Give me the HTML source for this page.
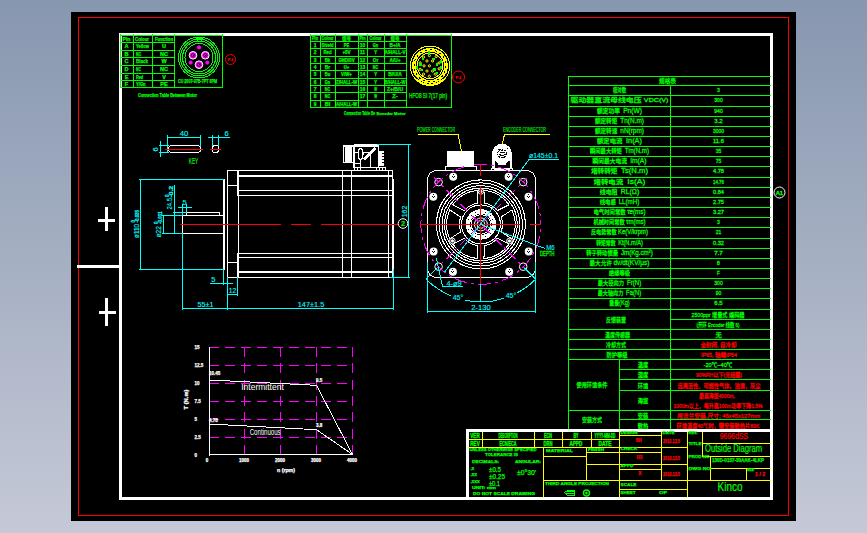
<!DOCTYPE html>
<html lang="zh"><head><meta charset="utf-8"><title>Outside Diagram</title>
<style>
html,body{margin:0;padding:0;width:867px;height:533px;overflow:hidden;background:#a6afc3}
svg{display:block;font-family:"Liberation Sans","Noto Sans CJK SC",sans-serif}
svg text{white-space:pre}
</style></head><body>
<svg width="867" height="533" viewBox="0 0 867 533" shape-rendering="crispEdges">
<defs><linearGradient id="bg" x1="0" y1="0" x2="0" y2="1"><stop offset="0" stop-color="#8797af"/><stop offset="1" stop-color="#c5c9d7"/></linearGradient></defs>
<rect x="0" y="0" width="867" height="533" fill="url(#bg)"/>
<rect x="71" y="12" width="725" height="509" fill="#000"/>
<rect x="78.5" y="17.5" width="710" height="498" fill="none" stroke="#ff0000" stroke-width="1"/>
<rect x="120.5" y="34.5" width="651" height="464" fill="none" stroke="#ffffff" stroke-width="3"/>
<rect x="77" y="265" width="43" height="3" fill="#ffffff"/>
<rect x="105" y="207" width="3" height="24" fill="#ffffff"/>
<rect x="98" y="219" width="17" height="3" fill="#ffffff"/>
<rect x="105" y="298" width="3" height="28" fill="#ffffff"/>
<rect x="99" y="311" width="17" height="3" fill="#ffffff"/>
<rect x="120" y="35" width="55" height="1" fill="#00ff00"/>
<rect x="120" y="42" width="55" height="1" fill="#00ff00"/>
<rect x="120" y="50" width="55" height="1" fill="#00ff00"/>
<rect x="120" y="57" width="55" height="1" fill="#00ff00"/>
<rect x="120" y="65" width="55" height="1" fill="#00ff00"/>
<rect x="120" y="73" width="55" height="1" fill="#00ff00"/>
<rect x="120" y="80" width="55" height="1" fill="#00ff00"/>
<rect x="120" y="87" width="55" height="1" fill="#00ff00"/>
<rect x="174" y="35" width="49" height="1" fill="#00ff00"/>
<rect x="174" y="87" width="49" height="1" fill="#00ff00"/>
<rect x="120" y="34" width="1" height="54" fill="#00ff00"/>
<rect x="133" y="34" width="1" height="54" fill="#00ff00"/>
<rect x="152" y="34" width="1" height="54" fill="#00ff00"/>
<rect x="174" y="34" width="1" height="54" fill="#00ff00"/>
<rect x="222" y="34" width="1" height="54" fill="#00ff00"/>
<text x="126.5" y="41.3" fill="#00ff00" stroke="#00ff00" stroke-width="0.25" font-size="5.5" text-anchor="middle" font-weight="bold" textLength="8" lengthAdjust="spacingAndGlyphs" >Pin</text>
<text x="135" y="41.3" fill="#00ff00" stroke="#00ff00" stroke-width="0.25" font-size="5.5" text-anchor="start" font-weight="bold" textLength="14" lengthAdjust="spacingAndGlyphs" >Colour</text>
<text x="155" y="41.3" fill="#00ff00" stroke="#00ff00" stroke-width="0.25" font-size="5.5" text-anchor="start" font-weight="bold" textLength="18" lengthAdjust="spacingAndGlyphs" >Function</text>
<text x="126.5" y="48.3" fill="#00ff00" stroke="#00ff00" stroke-width="0.25" font-size="5.5" text-anchor="middle" font-weight="bold" >A</text>
<text x="136" y="48.3" fill="#00ff00" stroke="#00ff00" stroke-width="0.25" font-size="5.5" text-anchor="start" font-weight="bold" textLength="13" lengthAdjust="spacingAndGlyphs" >Yellow</text>
<text x="164" y="48.3" fill="#00ff00" stroke="#00ff00" stroke-width="0.25" font-size="5.5" text-anchor="middle" font-weight="bold" >U</text>
<text x="126.5" y="56.3" fill="#00ff00" stroke="#00ff00" stroke-width="0.25" font-size="5.5" text-anchor="middle" font-weight="bold" >B</text>
<text x="136" y="56.3" fill="#00ff00" stroke="#00ff00" stroke-width="0.25" font-size="5.5" text-anchor="start" font-weight="bold" textLength="4.8" lengthAdjust="spacingAndGlyphs" >NC</text>
<text x="164" y="56.3" fill="#00ff00" stroke="#00ff00" stroke-width="0.25" font-size="5.5" text-anchor="middle" font-weight="bold" >NC</text>
<text x="126.5" y="63.3" fill="#00ff00" stroke="#00ff00" stroke-width="0.25" font-size="5.5" text-anchor="middle" font-weight="bold" >C</text>
<text x="136" y="63.3" fill="#00ff00" stroke="#00ff00" stroke-width="0.25" font-size="5.5" text-anchor="start" font-weight="bold" textLength="12.0" lengthAdjust="spacingAndGlyphs" >Black</text>
<text x="164" y="63.3" fill="#00ff00" stroke="#00ff00" stroke-width="0.25" font-size="5.5" text-anchor="middle" font-weight="bold" >W</text>
<text x="126.5" y="71.3" fill="#00ff00" stroke="#00ff00" stroke-width="0.25" font-size="5.5" text-anchor="middle" font-weight="bold" >D</text>
<text x="136" y="71.3" fill="#00ff00" stroke="#00ff00" stroke-width="0.25" font-size="5.5" text-anchor="start" font-weight="bold" textLength="4.8" lengthAdjust="spacingAndGlyphs" >NC</text>
<text x="164" y="71.3" fill="#00ff00" stroke="#00ff00" stroke-width="0.25" font-size="5.5" text-anchor="middle" font-weight="bold" >NC</text>
<text x="126.5" y="79.3" fill="#00ff00" stroke="#00ff00" stroke-width="0.25" font-size="5.5" text-anchor="middle" font-weight="bold" >E</text>
<text x="136" y="79.3" fill="#00ff00" stroke="#00ff00" stroke-width="0.25" font-size="5.5" text-anchor="start" font-weight="bold" textLength="7.199999999999999" lengthAdjust="spacingAndGlyphs" >Red</text>
<text x="164" y="79.3" fill="#00ff00" stroke="#00ff00" stroke-width="0.25" font-size="5.5" text-anchor="middle" font-weight="bold" >V</text>
<text x="126.5" y="86.3" fill="#00ff00" stroke="#00ff00" stroke-width="0.25" font-size="5.5" text-anchor="middle" font-weight="bold" >F</text>
<text x="136" y="86.3" fill="#00ff00" stroke="#00ff00" stroke-width="0.25" font-size="5.5" text-anchor="start" font-weight="bold" textLength="9.6" lengthAdjust="spacingAndGlyphs" >Y/Gn</text>
<text x="164" y="86.3" fill="#00ff00" stroke="#00ff00" stroke-width="0.25" font-size="5.5" text-anchor="middle" font-weight="bold" >PE</text>
<circle cx="199" cy="57.5" r="20.5" stroke="#00ff00" stroke-width="1" fill="none" />
<circle cx="199" cy="57.5" r="18.5" stroke="#00ff00" stroke-width="1" fill="none" />
<circle cx="199" cy="57.5" r="16.5" stroke="#00ff00" stroke-width="1" fill="none" />
<circle cx="199" cy="57.5" r="14" stroke="#00ff00" stroke-width="1" fill="none" />
<circle cx="193" cy="55.3" r="3.8" stroke="#ffffff" stroke-width="1" fill="#ff00ff"  shape-rendering="geometricPrecision"/>
<circle cx="193" cy="55.3" r="1.7" stroke="#000" stroke-width="0.8" fill="none"  shape-rendering="geometricPrecision"/>
<rect x="192.5" y="54.8" width="1" height="1" fill="#000"/>
<circle cx="205.3" cy="55.3" r="3.8" stroke="#ffffff" stroke-width="1" fill="#ff00ff"  shape-rendering="geometricPrecision"/>
<circle cx="205.3" cy="55.3" r="1.7" stroke="#000" stroke-width="0.8" fill="none"  shape-rendering="geometricPrecision"/>
<rect x="204.8" y="54.8" width="1" height="1" fill="#000"/>
<circle cx="199" cy="64.7" r="3.8" stroke="#ffffff" stroke-width="1" fill="#ff00ff"  shape-rendering="geometricPrecision"/>
<circle cx="199" cy="64.7" r="1.7" stroke="#000" stroke-width="0.8" fill="none"  shape-rendering="geometricPrecision"/>
<rect x="198.5" y="64.2" width="1" height="1" fill="#000"/>
<circle cx="199" cy="47.4" r="1.6" stroke="#ff00ff" stroke-width="1" fill="#ff00ff"  shape-rendering="geometricPrecision"/>
<circle cx="190.7" cy="62.6" r="1.6" stroke="#ff00ff" stroke-width="1" fill="#ff00ff"  shape-rendering="geometricPrecision"/>
<circle cx="207.4" cy="62.6" r="1.6" stroke="#ff00ff" stroke-width="1" fill="#ff00ff"  shape-rendering="geometricPrecision"/>
<rect x="196" y="38" width="7" height="1" fill="#00ff00"/>
<rect x="197" y="38" width="1" height="3" fill="#00ff00"/>
<rect x="201" y="38" width="1" height="3" fill="#00ff00"/>
<text x="197.5" y="83" fill="#00ff00" stroke="#00ff00" stroke-width="0.25" font-size="5" text-anchor="middle" font-weight="bold" textLength="39" lengthAdjust="spacingAndGlyphs" >CU 2007-07B-7PT 8PM</text>
<text x="167.5" y="97" fill="#00ff00" stroke="#00ff00" stroke-width="0.25" font-size="5" text-anchor="middle" font-weight="bold" textLength="59" lengthAdjust="spacingAndGlyphs" >Connection Table Between Motor</text>
<circle cx="230.5" cy="59.5" r="5" stroke="#ff0000" stroke-width="1" fill="none"  shape-rendering="geometricPrecision"/>
<text x="230.5" y="61" fill="#ff0000" stroke="#ff0000" stroke-width="0.25" font-size="3.5" text-anchor="middle" font-weight="normal" >P-1</text>
<rect x="310" y="35" width="97" height="1" fill="#00ff00"/>
<rect x="310" y="41" width="97" height="1" fill="#00ff00"/>
<rect x="310" y="48" width="97" height="1" fill="#00ff00"/>
<rect x="310" y="56" width="97" height="1" fill="#00ff00"/>
<rect x="310" y="63" width="97" height="1" fill="#00ff00"/>
<rect x="310" y="70" width="97" height="1" fill="#00ff00"/>
<rect x="310" y="78" width="97" height="1" fill="#00ff00"/>
<rect x="310" y="85" width="97" height="1" fill="#00ff00"/>
<rect x="310" y="92" width="97" height="1" fill="#00ff00"/>
<rect x="310" y="100" width="97" height="1" fill="#00ff00"/>
<rect x="310" y="107" width="97" height="1" fill="#00ff00"/>
<rect x="406" y="35" width="46" height="1" fill="#00ff00"/>
<rect x="406" y="107" width="46" height="1" fill="#00ff00"/>
<rect x="310" y="34" width="1" height="74" fill="#00ff00"/>
<rect x="320" y="34" width="1" height="74" fill="#00ff00"/>
<rect x="335" y="34" width="1" height="74" fill="#00ff00"/>
<rect x="358" y="34" width="1" height="74" fill="#00ff00"/>
<rect x="367" y="34" width="1" height="74" fill="#00ff00"/>
<rect x="384" y="34" width="1" height="74" fill="#00ff00"/>
<rect x="406" y="34" width="1" height="74" fill="#00ff00"/>
<rect x="451" y="34" width="1" height="74" fill="#00ff00"/>
<text x="315" y="40.2" fill="#00ff00" stroke="#00ff00" stroke-width="0.25" font-size="5" text-anchor="middle" font-weight="bold" textLength="6" lengthAdjust="spacingAndGlyphs" >Pin</text>
<text x="327.5" y="40.2" fill="#00ff00" stroke="#00ff00" stroke-width="0.25" font-size="5" text-anchor="middle" font-weight="bold" textLength="12" lengthAdjust="spacingAndGlyphs" >Colour</text>
<text x="346.5" y="40.2" fill="#00ff00" stroke="#00ff00" stroke-width="0.25" font-size="5" text-anchor="middle" font-weight="bold" textLength="9" lengthAdjust="spacingAndGlyphs" >信号</text>
<text x="362.5" y="40.2" fill="#00ff00" stroke="#00ff00" stroke-width="0.25" font-size="5" text-anchor="middle" font-weight="bold" textLength="6" lengthAdjust="spacingAndGlyphs" >Pin</text>
<text x="375.5" y="40.2" fill="#00ff00" stroke="#00ff00" stroke-width="0.25" font-size="5" text-anchor="middle" font-weight="bold" textLength="12" lengthAdjust="spacingAndGlyphs" >Colour</text>
<text x="395" y="40.2" fill="#00ff00" stroke="#00ff00" stroke-width="0.25" font-size="5" text-anchor="middle" font-weight="bold" textLength="9" lengthAdjust="spacingAndGlyphs" >信号</text>
<text x="315" y="47" fill="#00ff00" stroke="#00ff00" stroke-width="0.25" font-size="5" text-anchor="middle" font-weight="bold" textLength="2.7" lengthAdjust="spacingAndGlyphs" >1</text>
<text x="327.5" y="47" fill="#00ff00" stroke="#00ff00" stroke-width="0.25" font-size="5" text-anchor="middle" font-weight="bold" textLength="12" lengthAdjust="spacingAndGlyphs" >Shield</text>
<text x="346.5" y="47" fill="#00ff00" stroke="#00ff00" stroke-width="0.25" font-size="5" text-anchor="middle" font-weight="bold" textLength="5.4" lengthAdjust="spacingAndGlyphs" >PE</text>
<text x="362.5" y="47" fill="#00ff00" stroke="#00ff00" stroke-width="0.25" font-size="5" text-anchor="middle" font-weight="bold" textLength="5.4" lengthAdjust="spacingAndGlyphs" >10</text>
<text x="375.5" y="47" fill="#00ff00" stroke="#00ff00" stroke-width="0.25" font-size="5" text-anchor="middle" font-weight="bold" textLength="5.4" lengthAdjust="spacingAndGlyphs" >Gn</text>
<text x="395" y="47" fill="#00ff00" stroke="#00ff00" stroke-width="0.25" font-size="5" text-anchor="middle" font-weight="bold" textLength="10.8" lengthAdjust="spacingAndGlyphs" >B+/A</text>
<text x="315" y="54" fill="#00ff00" stroke="#00ff00" stroke-width="0.25" font-size="5" text-anchor="middle" font-weight="bold" textLength="2.7" lengthAdjust="spacingAndGlyphs" >2</text>
<text x="327.5" y="54" fill="#00ff00" stroke="#00ff00" stroke-width="0.25" font-size="5" text-anchor="middle" font-weight="bold" textLength="8.100000000000001" lengthAdjust="spacingAndGlyphs" >Red</text>
<text x="346.5" y="54" fill="#00ff00" stroke="#00ff00" stroke-width="0.25" font-size="5" text-anchor="middle" font-weight="bold" textLength="8.100000000000001" lengthAdjust="spacingAndGlyphs" >+5V</text>
<text x="362.5" y="54" fill="#00ff00" stroke="#00ff00" stroke-width="0.25" font-size="5" text-anchor="middle" font-weight="bold" textLength="5.4" lengthAdjust="spacingAndGlyphs" >11</text>
<text x="375.5" y="54" fill="#00ff00" stroke="#00ff00" stroke-width="0.25" font-size="5" text-anchor="middle" font-weight="bold" textLength="2.7" lengthAdjust="spacingAndGlyphs" >Y</text>
<text x="395" y="54" fill="#00ff00" stroke="#00ff00" stroke-width="0.25" font-size="5" text-anchor="middle" font-weight="bold" textLength="21" lengthAdjust="spacingAndGlyphs" >A/HALL-V</text>
<text x="315" y="62" fill="#00ff00" stroke="#00ff00" stroke-width="0.25" font-size="5" text-anchor="middle" font-weight="bold" textLength="2.7" lengthAdjust="spacingAndGlyphs" >3</text>
<text x="327.5" y="62" fill="#00ff00" stroke="#00ff00" stroke-width="0.25" font-size="5" text-anchor="middle" font-weight="bold" textLength="5.4" lengthAdjust="spacingAndGlyphs" >Bk</text>
<text x="346.5" y="62" fill="#00ff00" stroke="#00ff00" stroke-width="0.25" font-size="5" text-anchor="middle" font-weight="bold" textLength="16.200000000000003" lengthAdjust="spacingAndGlyphs" >GND/0V</text>
<text x="362.5" y="62" fill="#00ff00" stroke="#00ff00" stroke-width="0.25" font-size="5" text-anchor="middle" font-weight="bold" textLength="5.4" lengthAdjust="spacingAndGlyphs" >12</text>
<text x="375.5" y="62" fill="#00ff00" stroke="#00ff00" stroke-width="0.25" font-size="5" text-anchor="middle" font-weight="bold" textLength="5.4" lengthAdjust="spacingAndGlyphs" >Or</text>
<text x="395" y="62" fill="#00ff00" stroke="#00ff00" stroke-width="0.25" font-size="5" text-anchor="middle" font-weight="bold" textLength="10.8" lengthAdjust="spacingAndGlyphs" >A/U+</text>
<text x="315" y="69" fill="#00ff00" stroke="#00ff00" stroke-width="0.25" font-size="5" text-anchor="middle" font-weight="bold" textLength="2.7" lengthAdjust="spacingAndGlyphs" >4</text>
<text x="327.5" y="69" fill="#00ff00" stroke="#00ff00" stroke-width="0.25" font-size="5" text-anchor="middle" font-weight="bold" textLength="5.4" lengthAdjust="spacingAndGlyphs" >Br</text>
<text x="346.5" y="69" fill="#00ff00" stroke="#00ff00" stroke-width="0.25" font-size="5" text-anchor="middle" font-weight="bold" textLength="5.4" lengthAdjust="spacingAndGlyphs" >U+</text>
<text x="362.5" y="69" fill="#00ff00" stroke="#00ff00" stroke-width="0.25" font-size="5" text-anchor="middle" font-weight="bold" textLength="5.4" lengthAdjust="spacingAndGlyphs" >13</text>
<text x="375.5" y="69" fill="#00ff00" stroke="#00ff00" stroke-width="0.25" font-size="5" text-anchor="middle" font-weight="bold" textLength="5.4" lengthAdjust="spacingAndGlyphs" >NC</text>
<text x="315" y="76" fill="#00ff00" stroke="#00ff00" stroke-width="0.25" font-size="5" text-anchor="middle" font-weight="bold" textLength="2.7" lengthAdjust="spacingAndGlyphs" >5</text>
<text x="327.5" y="76" fill="#00ff00" stroke="#00ff00" stroke-width="0.25" font-size="5" text-anchor="middle" font-weight="bold" textLength="5.4" lengthAdjust="spacingAndGlyphs" >Bu</text>
<text x="346.5" y="76" fill="#00ff00" stroke="#00ff00" stroke-width="0.25" font-size="5" text-anchor="middle" font-weight="bold" textLength="10.8" lengthAdjust="spacingAndGlyphs" >V/W+</text>
<text x="362.5" y="76" fill="#00ff00" stroke="#00ff00" stroke-width="0.25" font-size="5" text-anchor="middle" font-weight="bold" textLength="5.4" lengthAdjust="spacingAndGlyphs" >14</text>
<text x="375.5" y="76" fill="#00ff00" stroke="#00ff00" stroke-width="0.25" font-size="5" text-anchor="middle" font-weight="bold" textLength="2.7" lengthAdjust="spacingAndGlyphs" >Y</text>
<text x="395" y="76" fill="#00ff00" stroke="#00ff00" stroke-width="0.25" font-size="5" text-anchor="middle" font-weight="bold" textLength="13.5" lengthAdjust="spacingAndGlyphs" >B/U/A</text>
<text x="315" y="84" fill="#00ff00" stroke="#00ff00" stroke-width="0.25" font-size="5" text-anchor="middle" font-weight="bold" textLength="2.7" lengthAdjust="spacingAndGlyphs" >6</text>
<text x="327.5" y="84" fill="#00ff00" stroke="#00ff00" stroke-width="0.25" font-size="5" text-anchor="middle" font-weight="bold" textLength="5.4" lengthAdjust="spacingAndGlyphs" >Gn</text>
<text x="346.5" y="84" fill="#00ff00" stroke="#00ff00" stroke-width="0.25" font-size="5" text-anchor="middle" font-weight="bold" textLength="21" lengthAdjust="spacingAndGlyphs" >Z/HALL-W</text>
<text x="362.5" y="84" fill="#00ff00" stroke="#00ff00" stroke-width="0.25" font-size="5" text-anchor="middle" font-weight="bold" textLength="5.4" lengthAdjust="spacingAndGlyphs" >15</text>
<text x="375.5" y="84" fill="#00ff00" stroke="#00ff00" stroke-width="0.25" font-size="5" text-anchor="middle" font-weight="bold" textLength="2.7" lengthAdjust="spacingAndGlyphs" >Y</text>
<text x="395" y="84" fill="#00ff00" stroke="#00ff00" stroke-width="0.25" font-size="5" text-anchor="middle" font-weight="bold" textLength="21" lengthAdjust="spacingAndGlyphs" >B/HALL-W</text>
<text x="315" y="91" fill="#00ff00" stroke="#00ff00" stroke-width="0.25" font-size="5" text-anchor="middle" font-weight="bold" textLength="2.7" lengthAdjust="spacingAndGlyphs" >7</text>
<text x="327.5" y="91" fill="#00ff00" stroke="#00ff00" stroke-width="0.25" font-size="5" text-anchor="middle" font-weight="bold" textLength="5.4" lengthAdjust="spacingAndGlyphs" >NC</text>
<text x="362.5" y="91" fill="#00ff00" stroke="#00ff00" stroke-width="0.25" font-size="5" text-anchor="middle" font-weight="bold" textLength="5.4" lengthAdjust="spacingAndGlyphs" >16</text>
<text x="375.5" y="91" fill="#00ff00" stroke="#00ff00" stroke-width="0.25" font-size="5" text-anchor="middle" font-weight="bold" textLength="2.7" lengthAdjust="spacingAndGlyphs" >W</text>
<text x="395" y="91" fill="#00ff00" stroke="#00ff00" stroke-width="0.25" font-size="5" text-anchor="middle" font-weight="bold" textLength="16.200000000000003" lengthAdjust="spacingAndGlyphs" >Z+/B/U</text>
<text x="315" y="98" fill="#00ff00" stroke="#00ff00" stroke-width="0.25" font-size="5" text-anchor="middle" font-weight="bold" textLength="2.7" lengthAdjust="spacingAndGlyphs" >8</text>
<text x="327.5" y="98" fill="#00ff00" stroke="#00ff00" stroke-width="0.25" font-size="5" text-anchor="middle" font-weight="bold" textLength="5.4" lengthAdjust="spacingAndGlyphs" >NC</text>
<text x="362.5" y="98" fill="#00ff00" stroke="#00ff00" stroke-width="0.25" font-size="5" text-anchor="middle" font-weight="bold" textLength="5.4" lengthAdjust="spacingAndGlyphs" >17</text>
<text x="375.5" y="98" fill="#00ff00" stroke="#00ff00" stroke-width="0.25" font-size="5" text-anchor="middle" font-weight="bold" textLength="2.7" lengthAdjust="spacingAndGlyphs" >W</text>
<text x="395" y="98" fill="#00ff00" stroke="#00ff00" stroke-width="0.25" font-size="5" text-anchor="middle" font-weight="bold" textLength="5.4" lengthAdjust="spacingAndGlyphs" >Z-</text>
<text x="315" y="106" fill="#00ff00" stroke="#00ff00" stroke-width="0.25" font-size="5" text-anchor="middle" font-weight="bold" textLength="2.7" lengthAdjust="spacingAndGlyphs" >9</text>
<text x="327.5" y="106" fill="#00ff00" stroke="#00ff00" stroke-width="0.25" font-size="5" text-anchor="middle" font-weight="bold" textLength="5.4" lengthAdjust="spacingAndGlyphs" >Bl</text>
<text x="346.5" y="106" fill="#00ff00" stroke="#00ff00" stroke-width="0.25" font-size="5" text-anchor="middle" font-weight="bold" textLength="21" lengthAdjust="spacingAndGlyphs" >A/HALL-W</text>
<circle cx="430" cy="65.8" r="19.7" stroke="#ffff00" stroke-width="1" fill="none" />
<circle cx="430" cy="65.8" r="16" stroke="#ffff00" stroke-width="3.6" fill="none" />
<circle cx="430" cy="65.8" r="12.8" stroke="#ffff00" stroke-width="1" fill="none" />
<path d="M416.7 79.1 A18.8 18.8 0 0 0 443.3 79.1" fill="none" stroke="#ffff00" stroke-width="1.6"/>
<circle cx="430" cy="65.8" r="16" stroke="#000" stroke-width="1" fill="none" stroke-dasharray="2 3"/>
<circle cx="429.390243902439" cy="55.609756097560975" r="1.1" stroke="#ffff00" stroke-width="1" fill="none"  shape-rendering="geometricPrecision"/>
<circle cx="426.9512195121951" cy="60.97560975609756" r="1.1" stroke="#ffff00" stroke-width="1" fill="none"  shape-rendering="geometricPrecision"/>
<circle cx="432.609756097561" cy="60.97560975609756" r="1.1" stroke="#ffff00" stroke-width="1" fill="none"  shape-rendering="geometricPrecision"/>
<circle cx="420.1219512195122" cy="62.92682926829268" r="1.1" stroke="#ffff00" stroke-width="1" fill="none"  shape-rendering="geometricPrecision"/>
<circle cx="424.0243902439024" cy="65.85365853658537" r="1.1" stroke="#ffff00" stroke-width="1" fill="none"  shape-rendering="geometricPrecision"/>
<circle cx="429.390243902439" cy="65.85365853658537" r="1.1" stroke="#ffff00" stroke-width="1" fill="none"  shape-rendering="geometricPrecision"/>
<circle cx="439.1463414634146" cy="62.92682926829268" r="1.1" stroke="#ffff00" stroke-width="1" fill="none"  shape-rendering="geometricPrecision"/>
<circle cx="420.1219512195122" cy="69.26829268292683" r="1.1" stroke="#ffff00" stroke-width="1" fill="none"  shape-rendering="geometricPrecision"/>
<circle cx="426.9512195121951" cy="71.02439024390245" r="1.1" stroke="#ffff00" stroke-width="1" fill="none"  shape-rendering="geometricPrecision"/>
<circle cx="432.609756097561" cy="71.02439024390245" r="1.1" stroke="#ffff00" stroke-width="1" fill="none"  shape-rendering="geometricPrecision"/>
<circle cx="439.1463414634146" cy="68.78048780487805" r="1.1" stroke="#ffff00" stroke-width="1" fill="none"  shape-rendering="geometricPrecision"/>
<circle cx="423.5365853658537" cy="74.14634146341464" r="1.1" stroke="#ffff00" stroke-width="1" fill="none"  shape-rendering="geometricPrecision"/>
<circle cx="429.390243902439" cy="76.29268292682926" r="1.1" stroke="#ffff00" stroke-width="1" fill="none"  shape-rendering="geometricPrecision"/>
<circle cx="435.2439024390244" cy="74.14634146341464" r="1.1" stroke="#ffff00" stroke-width="1" fill="none"  shape-rendering="geometricPrecision"/>
<circle cx="436.219512195122" cy="56.58536585365854" r="1.1" stroke="#ffff00" stroke-width="1" fill="none"  shape-rendering="geometricPrecision"/>
<circle cx="423.5365853658537" cy="57.07317073170732" r="1.1" stroke="#ffff00" stroke-width="1" fill="none"  shape-rendering="geometricPrecision"/>
<rect x="421.8" y="57.8" width="2.4" height="2.4" fill="#00ff00"/>
<rect x="432.1" y="57.8" width="2.4" height="2.4" fill="#00ff00"/>
<rect x="419.4" y="63.2" width="2.4" height="2.4" fill="#00ff00"/>
<rect x="435.5" y="63.2" width="2.4" height="2.4" fill="#00ff00"/>
<rect x="439.9" y="60.3" width="2.4" height="2.4" fill="#00ff00"/>
<rect x="433.1" y="68.1" width="2.4" height="2.4" fill="#00ff00"/>
<rect x="439.9" y="66.1" width="2.4" height="2.4" fill="#00ff00"/>
<rect x="436.0" y="71.5" width="2.4" height="2.4" fill="#00ff00"/>
<rect x="420.9" y="68.6" width="2.4" height="2.4" fill="#00ff00"/>
<rect x="415.5" y="66.1" width="2.4" height="2.4" fill="#00ff00"/>
<rect x="428" y="51" width="2" height="4" fill="#00ff00"/>
<text x="428" y="98" fill="#00ff00" stroke="#00ff00" stroke-width="0.25" font-size="6.5" text-anchor="middle" font-weight="normal" textLength="38" lengthAdjust="spacingAndGlyphs" >HFO8 SI 7(17 pin)</text>
<text x="375" y="114.5" fill="#00ff00" stroke="#00ff00" stroke-width="0.25" font-size="5" text-anchor="end" font-weight="bold" textLength="31" lengthAdjust="spacingAndGlyphs" >Connection Table Be</text>
<text x="376.5" y="114.5" fill="#00ff00" stroke="#00ff00" stroke-width="0.25" font-size="4.2" text-anchor="start" font-weight="bold" textLength="29" lengthAdjust="spacingAndGlyphs" >Encoder Motor</text>
<circle cx="458.5" cy="77" r="6" stroke="#ff0000" stroke-width="1" fill="none"  shape-rendering="geometricPrecision"/>
<text x="458.5" y="78.5" fill="#ff0000" stroke="#ff0000" stroke-width="0.25" font-size="3.5" text-anchor="middle" font-weight="normal" >P-1</text>
<rect x="167" y="137" width="34" height="1" fill="#00ffff"/>
<rect x="167" y="135" width="1" height="17" fill="#00ffff"/>
<rect x="200" y="135" width="1" height="17" fill="#00ffff"/>
<text x="184" y="135.6" fill="#00ffff" stroke="#00ffff" stroke-width="0.12" font-size="7.5" text-anchor="middle" font-weight="normal" textLength="8.5" lengthAdjust="spacingAndGlyphs" >40</text>
<rect x="168.5" y="145.5" width="32" height="7" rx="3.5" fill="none" stroke="#ffffff"/>
<rect x="165" y="149" width="38" height="1" fill="#ff0000"/>
<rect x="160" y="141" width="1" height="16" fill="#00ffff"/>
<rect x="159" y="145" width="10" height="1" fill="#00ffff"/>
<rect x="159" y="152" width="10" height="1" fill="#00ffff"/>
<text transform="translate(158,149.5) rotate(-90)" fill="#00ffff" stroke="#00ffff" stroke-width="0.12" font-size="7.5" text-anchor="middle" font-weight="normal">6</text>
<rect x="208" y="137" width="22" height="1" fill="#00ffff"/>
<rect x="212" y="135" width="1" height="11" fill="#00ffff"/>
<rect x="218" y="135" width="1" height="11" fill="#00ffff"/>
<rect x="212.5" y="145.5" width="6" height="7" rx="2.5" fill="none" stroke="#ffffff"/>
<rect x="210" y="149" width="11" height="1" fill="#ff0000"/>
<text x="226.5" y="135.6" fill="#00ffff" stroke="#00ffff" stroke-width="0.12" font-size="7.5" text-anchor="middle" font-weight="normal" >6</text>
<text x="193.5" y="163.8" fill="#00ff00" stroke="#00ff00" stroke-width="0.12" font-size="9" text-anchor="middle" font-weight="normal" textLength="9.5" lengthAdjust="spacingAndGlyphs" >KEY</text>
<rect x="223" y="179" width="2" height="91" fill="#ffffff"/>
<rect x="227" y="170" width="1" height="108" fill="#ffffff"/>
<rect x="227" y="170" width="166" height="1" fill="#ffffff"/>
<rect x="227" y="277" width="166" height="1" fill="#ffffff"/>
<rect x="227" y="185" width="11" height="1" fill="#ffffff"/>
<rect x="227" y="262" width="11" height="1" fill="#ffffff"/>
<rect x="237" y="170" width="1" height="26" fill="#ffffff"/>
<rect x="237" y="253" width="1" height="25" fill="#ffffff"/>
<rect x="238" y="170" width="1" height="108" fill="#ffffff"/>
<rect x="238" y="175" width="155" height="2" fill="#ffffff"/>
<rect x="238" y="190" width="155" height="1" fill="#ffffff"/>
<rect x="238" y="195" width="155" height="1" fill="#ffffff"/>
<rect x="238" y="253" width="155" height="1" fill="#ffffff"/>
<rect x="238" y="257" width="155" height="1" fill="#ffffff"/>
<rect x="238" y="271" width="155" height="2" fill="#ffffff"/>
<rect x="342" y="170" width="1" height="108" fill="#ffffff"/>
<rect x="351" y="170" width="1" height="108" fill="#ffffff"/>
<rect x="388" y="170" width="1" height="108" fill="#ffffff"/>
<rect x="392" y="170" width="1" height="108" fill="#ffffff"/>
<rect x="393" y="179" width="1" height="91" fill="#ffffff"/>
<rect x="183" y="215" width="42" height="1" fill="#ffffff"/>
<rect x="183" y="233" width="42" height="1" fill="#ffffff"/>
<rect x="182" y="216" width="1" height="17" fill="#ffffff"/>
<rect x="187" y="212" width="33" height="1" fill="#ffffff"/>
<rect x="186" y="213" width="1" height="2" fill="#ffffff"/>
<rect x="219" y="213" width="1" height="2" fill="#ffffff"/>
<rect x="180" y="224" width="101" height="1" fill="#ff0000"/>
<rect x="291" y="224" width="20" height="1" fill="#ff0000"/>
<rect x="321" y="224" width="77" height="1" fill="#ff0000"/>
<circle cx="403" cy="223.5" r="4.8" stroke="#ffffff" stroke-width="1" fill="none"  shape-rendering="geometricPrecision"/>
<text x="403" y="226.3" fill="#00ff00" stroke="#00ff00" stroke-width="0.12" font-size="7.5" text-anchor="middle" font-weight="bold" >2</text>
<rect x="343" y="145" width="10" height="18" rx="1.5" fill="#ffffff"/>
<rect x="344" y="147" width="1" height="15" fill="#000"/>
<rect x="352" y="147" width="1" height="15" fill="#000"/>
<path d="M353.5 167.5 V146.5 Q353.5 144.5 355.5 144.5 H376.5 Q378.5 144.5 378.5 146.5 V167.5" fill="none" stroke="#ffffff"/>
<rect x="354" y="145" width="25" height="2" fill="#ffffff"/>
<rect x="354" y="146" width="1" height="22" fill="#ffffff"/>
<ellipse cx="360.6" cy="154" rx="2.3" ry="5.8" fill="none" stroke="#ffffff" stroke-width="1.3"/>
<line x1="375" y1="147.4" x2="363.2" y2="159.2" stroke="#ffffff" stroke-width="1" />
<line x1="376" y1="148.4" x2="364.2" y2="160.2" stroke="#ffffff" stroke-width="1" />
<rect x="355" y="152" width="3" height="1" fill="#ffffff"/>
<rect x="363" y="152" width="8" height="1" fill="#ffffff"/>
<rect x="370" y="152" width="1" height="15" fill="#ffffff"/>
<rect x="379" y="151" width="5" height="15" fill="#ffffff"/>
<rect x="382" y="153" width="2" height="1" fill="#000"/>
<rect x="382" y="156" width="2" height="1" fill="#000"/>
<rect x="382" y="159" width="2" height="1" fill="#000"/>
<rect x="382" y="162" width="2" height="1" fill="#000"/>
<rect x="355" y="163" width="6" height="1" fill="#ffffff"/>
<rect x="360" y="160" width="1" height="7" fill="#ffffff"/>
<rect x="354" y="167" width="32" height="1" fill="#ffffff"/>
<rect x="354" y="167" width="1" height="3" fill="#ffffff"/>
<rect x="357" y="167" width="1" height="3" fill="#ffffff"/>
<rect x="360" y="167" width="1" height="3" fill="#ffffff"/>
<rect x="376" y="167" width="1" height="3" fill="#ffffff"/>
<rect x="379" y="167" width="1" height="3" fill="#ffffff"/>
<rect x="382" y="167" width="1" height="3" fill="#ffffff"/>
<rect x="385" y="167" width="1" height="3" fill="#ffffff"/>
<rect x="139" y="179" width="85" height="1" fill="#00ffff"/>
<rect x="139" y="269" width="85" height="1" fill="#00ffff"/>
<rect x="140" y="179" width="1" height="91" fill="#00ffff"/>
<text transform="translate(139,238) rotate(-90)" fill="#00ffff" stroke="#00ffff" stroke-width="0.12" font-size="7.5" text-anchor="start" font-weight="normal" textLength="14" lengthAdjust="spacingAndGlyphs">ø110</text>
<text transform="translate(135.2,222.5) rotate(-90)" fill="#00ffff" stroke="#00ffff" stroke-width="0.25" font-size="4.5" text-anchor="start" font-weight="bold">0</text>
<text transform="translate(139.3,222.5) rotate(-90)" fill="#00ffff" stroke="#00ffff" stroke-width="0.25" font-size="4.5" text-anchor="start" font-weight="bold" textLength="12.5" lengthAdjust="spacingAndGlyphs">-0.035</text>
<rect x="174" y="185" width="1" height="49" fill="#00ffff"/>
<rect x="173" y="212" width="14" height="1" fill="#00ffff"/>
<text transform="translate(172.3,209.5) rotate(-90)" fill="#00ffff" stroke="#00ffff" stroke-width="0.12" font-size="7.5" text-anchor="start" font-weight="normal" textLength="11.5" lengthAdjust="spacingAndGlyphs">24.5</text>
<text transform="translate(168.5,197) rotate(-90)" fill="#00ffff" stroke="#00ffff" stroke-width="0.25" font-size="4.5" text-anchor="start" font-weight="bold">0</text>
<text transform="translate(172.6,197.5) rotate(-90)" fill="#00ffff" stroke="#00ffff" stroke-width="0.25" font-size="4.5" text-anchor="start" font-weight="bold" textLength="11.5" lengthAdjust="spacingAndGlyphs">-0.2</text>
<rect x="178" y="207" width="14" height="1" fill="#00ffff"/>
<rect x="182" y="204" width="1" height="12" fill="#00ffff"/>
<rect x="186" y="204" width="1" height="9" fill="#00ffff"/>
<text x="184.7" y="205.4" fill="#00ffff" stroke="#00ffff" stroke-width="0.12" font-size="7.5" text-anchor="middle" font-weight="normal" >5</text>
<rect x="163" y="215" width="1" height="19" fill="#00ffff"/>
<rect x="162" y="215" width="21" height="1" fill="#00ffff"/>
<rect x="162" y="233" width="21" height="1" fill="#00ffff"/>
<text transform="translate(161.3,237.5) rotate(-90)" fill="#00ffff" stroke="#00ffff" stroke-width="0.12" font-size="7.5" text-anchor="start" font-weight="normal" textLength="11.5" lengthAdjust="spacingAndGlyphs">ø22</text>
<text transform="translate(157.5,224) rotate(-90)" fill="#00ffff" stroke="#00ffff" stroke-width="0.25" font-size="4.5" text-anchor="start" font-weight="bold">0</text>
<text transform="translate(161.6,224) rotate(-90)" fill="#00ffff" stroke="#00ffff" stroke-width="0.25" font-size="4.5" text-anchor="start" font-weight="bold" textLength="12.5" lengthAdjust="spacingAndGlyphs">-0.011</text>
<rect x="182" y="233" width="1" height="77" fill="#00ffff"/>
<rect x="182" y="308" width="212" height="1" fill="#00ffff"/>
<rect x="227" y="277" width="1" height="33" fill="#00ffff"/>
<rect x="393" y="269" width="1" height="41" fill="#00ffff"/>
<text x="205.5" y="307.2" fill="#00ffff" stroke="#00ffff" stroke-width="0.12" font-size="7.5" text-anchor="middle" font-weight="normal" textLength="16" lengthAdjust="spacingAndGlyphs" >55±1</text>
<text x="311" y="307.2" fill="#00ffff" stroke="#00ffff" stroke-width="0.12" font-size="7.5" text-anchor="middle" font-weight="normal" textLength="26.5" lengthAdjust="spacingAndGlyphs" >147±1.5</text>
<rect x="210" y="283" width="23" height="1" fill="#00ffff"/>
<rect x="223" y="269" width="1" height="16" fill="#00ffff"/>
<text x="213.3" y="282" fill="#00ffff" stroke="#00ffff" stroke-width="0.12" font-size="7.5" text-anchor="middle" font-weight="normal" >5</text>
<rect x="237" y="277" width="1" height="19" fill="#00ffff"/>
<rect x="227" y="294" width="11" height="1" fill="#00ffff"/>
<text x="232.5" y="293.3" fill="#00ffff" stroke="#00ffff" stroke-width="0.12" font-size="7.5" text-anchor="middle" font-weight="normal" textLength="7.5" lengthAdjust="spacingAndGlyphs" >12</text>
<rect x="377" y="144" width="34" height="1" fill="#00ffff"/>
<rect x="408" y="144" width="1" height="134" fill="#00ffff"/>
<rect x="390" y="277" width="20" height="1" fill="#00ffff"/>
<text transform="translate(406.5,211.5) rotate(-90)" fill="#00ffff" stroke="#00ffff" stroke-width="0.12" font-size="7.5" text-anchor="middle" font-weight="normal" textLength="11.5" lengthAdjust="spacingAndGlyphs">162</text>
<text x="417" y="132.2" fill="#00ff00" stroke="#00ff00" stroke-width="0.12" font-size="7" text-anchor="start" font-weight="normal" textLength="38" lengthAdjust="spacingAndGlyphs" >POWER CONNECTOR</text>
<rect x="418" y="134" width="40" height="1" fill="#ffff00"/>
<line x1="458" y1="134.5" x2="461.5" y2="151" stroke="#ffff00" stroke-width="1" />
<text x="503" y="132.2" fill="#00ff00" stroke="#00ff00" stroke-width="0.12" font-size="7" text-anchor="start" font-weight="normal" textLength="43" lengthAdjust="spacingAndGlyphs" >ENCODER CONNECTOR</text>
<rect x="504" y="134" width="46" height="1" fill="#ffff00"/>
<line x1="504.5" y1="134.5" x2="502" y2="145" stroke="#ffff00" stroke-width="1" />
<rect x="445.5" y="166.5" width="31" height="4" fill="none" stroke="#ffffff"/>
<path d="M492 153 V168.5 H494.5 V160.5 L498.5 164 H505.5 L509.5 160.5 V168.5 H512 V153 Z" fill="#ffffff"/>
<circle cx="502" cy="153.6" r="9.9" fill="#ffffff"/>
<circle cx="502" cy="153.6" r="4.3" fill="none" stroke="#000" stroke-width="1" stroke-dasharray="1.6 1.2"/>
<path d="M499.5 152.5 h5 M500 155.5 h4 M498.5 154 h2 M503.5 154 h2 M501 150.5 h2 M500.5 157.5 h3 M497.5 149.5 h1 M506.5 148.5 h1 M497.5 156.5 h1" stroke="#000" fill="none"/>
<rect x="498" y="164" width="8" height="1" fill="#ffffff"/>
<rect x="491.5" y="168.5" width="21" height="2" fill="none" stroke="#ffffff"/>
<rect x="494" y="169" width="16" height="1" fill="#ffffff"/>
<rect x="427.5" y="170.5" width="108" height="107" rx="9" fill="none" stroke="#ffffff"/>
<circle cx="480.9" cy="224.4" r="44.5" stroke="#ffffff" stroke-width="1" fill="none" />
<circle cx="480.9" cy="224.4" r="41.6" stroke="#ffffff" stroke-width="1" fill="none" />
<circle cx="480.9" cy="224.4" r="38.8" stroke="#ffffff" stroke-width="1" fill="none" />
<circle cx="480.9" cy="224.4" r="36.4" stroke="#ffffff" stroke-width="1" fill="none" />
<circle cx="480.9" cy="224.4" r="19.5" stroke="#ffffff" stroke-width="1" fill="none" />
<circle cx="480.9" cy="224.4" r="13" stroke="#ffffff" stroke-width="4.5" fill="none" />
<circle cx="480.9" cy="224.4" r="9.8" stroke="#ffffff" stroke-width="1" fill="none" />
<circle cx="480.9" cy="224.4" r="6.5" stroke="#ffffff" stroke-width="1" fill="none"  shape-rendering="geometricPrecision"/>
<circle cx="480.9" cy="224.4" r="4" stroke="#ffffff" stroke-width="1" fill="none"  shape-rendering="geometricPrecision"/>
<rect x="493.4" y="223.9" width="1" height="1" fill="#000"/>
<rect x="492.4" y="228.9" width="1" height="1" fill="#000"/>
<rect x="489.6" y="233.1" width="1" height="1" fill="#000"/>
<rect x="485.4" y="235.9" width="1" height="1" fill="#000"/>
<rect x="480.4" y="236.9" width="1" height="1" fill="#000"/>
<rect x="475.4" y="235.9" width="1" height="1" fill="#000"/>
<rect x="471.2" y="233.1" width="1" height="1" fill="#000"/>
<rect x="468.4" y="228.9" width="1" height="1" fill="#000"/>
<rect x="467.4" y="223.9" width="1" height="1" fill="#000"/>
<rect x="468.4" y="218.9" width="1" height="1" fill="#000"/>
<rect x="471.2" y="214.7" width="1" height="1" fill="#000"/>
<rect x="475.4" y="211.9" width="1" height="1" fill="#000"/>
<rect x="480.4" y="210.9" width="1" height="1" fill="#000"/>
<rect x="485.4" y="211.9" width="1" height="1" fill="#000"/>
<rect x="489.6" y="214.7" width="1" height="1" fill="#000"/>
<rect x="492.4" y="218.9" width="1" height="1" fill="#000"/>
<path d="M501.1 217.0 L512.0 209.9 A34.3 34.3 0 0 1 512.0 238.9 L501.1 231.8 A21.5 21.5 0 0 0 501.1 217.0 Z" fill="none" stroke="#ffffff" stroke-linejoin="round"/>
<path d="M497.4 238.2 L509.0 244.1 A34.3 34.3 0 0 1 483.9 258.6 L484.6 245.6 A21.5 21.5 0 0 0 497.4 238.2 Z" fill="none" stroke="#ffffff" stroke-linejoin="round"/>
<path d="M477.2 245.6 L477.9 258.6 A34.3 34.3 0 0 1 452.8 244.1 L464.4 238.2 A21.5 21.5 0 0 0 477.2 245.6 Z" fill="none" stroke="#ffffff" stroke-linejoin="round"/>
<path d="M460.7 231.8 L449.8 238.9 A34.3 34.3 0 0 1 449.8 209.9 L460.7 217.0 A21.5 21.5 0 0 0 460.7 231.8 Z" fill="none" stroke="#ffffff" stroke-linejoin="round"/>
<path d="M464.4 210.6 L452.8 204.7 A34.3 34.3 0 0 1 477.9 190.2 L477.2 203.2 A21.5 21.5 0 0 0 464.4 210.6 Z" fill="none" stroke="#ffffff" stroke-linejoin="round"/>
<path d="M484.6 203.2 L483.9 190.2 A34.3 34.3 0 0 1 509.0 204.7 L497.4 210.6 A21.5 21.5 0 0 0 484.6 203.2 Z" fill="none" stroke="#ffffff" stroke-linejoin="round"/>
<circle cx="480.9" cy="191.4" r="2.8" stroke="#ffffff" stroke-width="1" fill="#000"  shape-rendering="geometricPrecision"/>
<circle cx="480.9" cy="191.4" r="1.2" stroke="#ffffff" stroke-width="1" fill="#ffffff"  shape-rendering="geometricPrecision"/>
<circle cx="452.3211616751135" cy="240.9" r="2.8" stroke="#ffffff" stroke-width="1" fill="#000"  shape-rendering="geometricPrecision"/>
<circle cx="452.3211616751135" cy="240.9" r="1.2" stroke="#ffffff" stroke-width="1" fill="#ffffff"  shape-rendering="geometricPrecision"/>
<circle cx="509.47883832488645" cy="240.9" r="2.8" stroke="#ffffff" stroke-width="1" fill="#000"  shape-rendering="geometricPrecision"/>
<circle cx="509.47883832488645" cy="240.9" r="1.2" stroke="#ffffff" stroke-width="1" fill="#ffffff"  shape-rendering="geometricPrecision"/>
<circle cx="438.59999999999997" cy="182.10000000000002" r="3.8" stroke="#ffffff" stroke-width="1" fill="none"  shape-rendering="geometricPrecision"/>
<circle cx="438.59999999999997" cy="266.7" r="3.8" stroke="#ffffff" stroke-width="1" fill="none"  shape-rendering="geometricPrecision"/>
<circle cx="523.1999999999999" cy="182.10000000000002" r="3.8" stroke="#ffffff" stroke-width="1" fill="none"  shape-rendering="geometricPrecision"/>
<circle cx="523.1999999999999" cy="266.7" r="3.8" stroke="#ffffff" stroke-width="1" fill="none"  shape-rendering="geometricPrecision"/>
<circle cx="453.2" cy="176.8" r="3.4" stroke="#ffffff" stroke-width="1.2" fill="#ffffff"  shape-rendering="geometricPrecision"/>
<path d="M451.7 176.3 h1 m1 0 h1 m-2 -1.5 h1 m-1 3 h1" stroke="#000" fill="none"/>
<circle cx="508.59999999999997" cy="176.8" r="3.4" stroke="#ffffff" stroke-width="1.2" fill="#ffffff"  shape-rendering="geometricPrecision"/>
<path d="M507.1 176.3 h1 m1 0 h1 m-2 -1.5 h1 m-1 3 h1" stroke="#000" fill="none"/>
<circle cx="433.29999999999995" cy="196.70000000000002" r="3.4" stroke="#ffffff" stroke-width="1.2" fill="#ffffff"  shape-rendering="geometricPrecision"/>
<path d="M431.8 196.2 h1 m1 0 h1 m-2 -1.5 h1 m-1 3 h1" stroke="#000" fill="none"/>
<circle cx="528.5" cy="196.70000000000002" r="3.4" stroke="#ffffff" stroke-width="1.2" fill="#ffffff"  shape-rendering="geometricPrecision"/>
<path d="M527.0 196.2 h1 m1 0 h1 m-2 -1.5 h1 m-1 3 h1" stroke="#000" fill="none"/>
<circle cx="433.59999999999997" cy="251.6" r="3.4" stroke="#ffffff" stroke-width="1.2" fill="#ffffff"  shape-rendering="geometricPrecision"/>
<path d="M432.1 251.1 h1 m1 0 h1 m-2 -1.5 h1 m-1 3 h1" stroke="#000" fill="none"/>
<circle cx="528.6999999999999" cy="251.6" r="3.4" stroke="#ffffff" stroke-width="1.2" fill="#ffffff"  shape-rendering="geometricPrecision"/>
<path d="M527.2 251.1 h1 m1 0 h1 m-2 -1.5 h1 m-1 3 h1" stroke="#000" fill="none"/>
<circle cx="452.9" cy="271.8" r="3.4" stroke="#ffffff" stroke-width="1.2" fill="#ffffff"  shape-rendering="geometricPrecision"/>
<path d="M451.4 271.3 h1 m1 0 h1 m-2 -1.5 h1 m-1 3 h1" stroke="#000" fill="none"/>
<circle cx="509.2" cy="271.8" r="3.4" stroke="#ffffff" stroke-width="1.2" fill="#ffffff"  shape-rendering="geometricPrecision"/>
<path d="M507.7 271.3 h1 m1 0 h1 m-2 -1.5 h1 m-1 3 h1" stroke="#000" fill="none"/>
<circle cx="480.9" cy="224.4" r="60" stroke="#ff00ff" stroke-width="1" fill="none" stroke-dasharray="13 4 3 4" stroke-dashoffset="12.2"/>
<line x1="495.0" y1="238.5" x2="527.6" y2="271.1" stroke="#ff00ff" stroke-width="1" stroke-dasharray="9 4 3 4"/>
<line x1="483.0" y1="226.5" x2="489.4" y2="232.9" stroke="#ff00ff" stroke-width="1" />
<line x1="466.8" y1="238.5" x2="434.2" y2="271.1" stroke="#ff00ff" stroke-width="1" stroke-dasharray="9 4 3 4"/>
<line x1="478.8" y1="226.5" x2="472.4" y2="232.9" stroke="#ff00ff" stroke-width="1" />
<line x1="466.8" y1="210.3" x2="434.2" y2="177.7" stroke="#ff00ff" stroke-width="1" stroke-dasharray="9 4 3 4"/>
<line x1="478.8" y1="222.3" x2="472.4" y2="215.9" stroke="#ff00ff" stroke-width="1" />
<line x1="495.0" y1="210.3" x2="527.6" y2="177.7" stroke="#ff00ff" stroke-width="1" stroke-dasharray="9 4 3 4"/>
<line x1="483.0" y1="222.3" x2="489.4" y2="215.9" stroke="#ff00ff" stroke-width="1" />
<rect x="447" y="151" width="27" height="15" fill="#ffffff"/>
<rect x="480" y="165" width="1" height="11" fill="#ff0000"/>
<rect x="480" y="186" width="1" height="98" fill="#ff0000"/>
<rect x="420" y="224" width="100" height="1" fill="#ff0000"/>
<rect x="530" y="224" width="11" height="1" fill="#ff0000"/>
<text x="529" y="158.3" fill="#00ffff" stroke="#00ffff" stroke-width="0.12" font-size="7.5" text-anchor="start" font-weight="normal" textLength="29" lengthAdjust="spacingAndGlyphs" >ø145±0.1</text>
<rect x="529" y="159" width="30" height="1" fill="#00ffff"/>
<line x1="529" y1="159.5" x2="444.4" y2="272.3" stroke="#00ffff" stroke-width="1" />
<line x1="480.9" y1="224.4" x2="545" y2="248.5" stroke="#00ffff" stroke-width="1" />
<text x="550.5" y="250" fill="#00ffff" stroke="#00ffff" stroke-width="0.12" font-size="7.5" text-anchor="middle" font-weight="normal" textLength="8.5" lengthAdjust="spacingAndGlyphs" >M6</text>
<text x="547.2" y="255.7" fill="#00ff00" stroke="#00ff00" stroke-width="0.3" font-size="7" text-anchor="middle" font-weight="normal" textLength="14.5" lengthAdjust="spacingAndGlyphs" >DEPTH</text>
<line x1="436.3" y1="258" x2="442.6" y2="286.9" stroke="#00ffff" stroke-width="1" />
<rect x="442" y="286" width="21" height="1" fill="#00ffff"/>
<text x="454" y="286" fill="#00ffff" stroke="#00ffff" stroke-width="0.12" font-size="7.5" text-anchor="middle" font-weight="normal" textLength="15" lengthAdjust="spacingAndGlyphs" >4-ø9</text>
<rect x="427" y="262" width="1" height="51" fill="#00ffff"/>
<rect x="535" y="262" width="1" height="51" fill="#00ffff"/>
<rect x="427" y="311" width="109" height="1" fill="#00ffff"/>
<text x="481" y="310" fill="#00ffff" stroke="#00ffff" stroke-width="0.12" font-size="7.5" text-anchor="middle" font-weight="normal" textLength="19.5" lengthAdjust="spacingAndGlyphs" >2-130</text>
<rect x="480" y="284" width="1" height="18" fill="#00ffff"/>
<path d="M535.7 279.2 A77.5 77.5 0 0 1 517.3 292.8" fill="none" stroke="#00ffff"/>
<path d="M503.6 298.5 A77.5 77.5 0 0 1 464.8 300.2" fill="none" stroke="#00ffff"/>
<path d="M450.6 295.7 A77.5 77.5 0 0 1 426.1 279.2" fill="none" stroke="#00ffff"/>
<line x1="480.9" y1="224.4" x2="535.7007755419575" y2="279.20077554195746" stroke="#00ffff" stroke-width="1" stroke-dasharray="0 62 20 0"/>
<line x1="480.9" y1="224.4" x2="426.09922445804256" y2="279.20077554195746" stroke="#00ffff" stroke-width="1" stroke-dasharray="0 62 20 0"/>
<text x="458" y="299.8" fill="#00ffff" stroke="#00ffff" stroke-width="0.12" font-size="7.5" text-anchor="middle" font-weight="normal" textLength="10.5" lengthAdjust="spacingAndGlyphs" >45°</text>
<text x="511" y="298" fill="#00ffff" stroke="#00ffff" stroke-width="0.12" font-size="7.5" text-anchor="middle" font-weight="normal" textLength="10.5" lengthAdjust="spacingAndGlyphs" >45°</text>
<line x1="244.5" y1="347" x2="244.5" y2="455" stroke="#ff00ff" stroke-width="1" stroke-dasharray="10 6.3"/>
<line x1="280.5" y1="347" x2="280.5" y2="455" stroke="#ff00ff" stroke-width="1" stroke-dasharray="10 6.3"/>
<line x1="316.5" y1="347" x2="316.5" y2="455" stroke="#ff00ff" stroke-width="1" stroke-dasharray="10 6.3"/>
<line x1="352.5" y1="347" x2="352.5" y2="455" stroke="#ff00ff" stroke-width="1" stroke-dasharray="10 6.3"/>
<line x1="209" y1="347.5" x2="353" y2="347.5" stroke="#ff00ff" stroke-width="1" stroke-dasharray="10 6"/>
<line x1="209" y1="365.5" x2="353" y2="365.5" stroke="#ff00ff" stroke-width="1" stroke-dasharray="10 6"/>
<line x1="209" y1="383.5" x2="353" y2="383.5" stroke="#ff00ff" stroke-width="1" stroke-dasharray="10 6"/>
<line x1="209" y1="401.5" x2="353" y2="401.5" stroke="#ff00ff" stroke-width="1" stroke-dasharray="10 6"/>
<line x1="209" y1="419.5" x2="353" y2="419.5" stroke="#ff00ff" stroke-width="1" stroke-dasharray="10 6"/>
<line x1="209" y1="437.5" x2="353" y2="437.5" stroke="#ff00ff" stroke-width="1" stroke-dasharray="10 6"/>
<rect x="209" y="347" width="1" height="109" fill="#ffffff"/>
<rect x="209" y="454" width="144" height="1" fill="#ffffff"/>
<polyline points="209.5,380 316.5,385.3 352.5,454.5" fill="none" stroke="#ffffff"/>
<polyline points="209.5,424 316.5,429.7 352.5,454.5" fill="none" stroke="#ffffff"/>
<text x="262.5" y="389.7" fill="#ffffff" stroke="#ffffff" stroke-width="0" font-size="9.6" text-anchor="middle" font-weight="normal" textLength="42.5" lengthAdjust="spacingAndGlyphs" >Intermittent</text>
<text x="265.2" y="435.3" fill="#ffffff" stroke="#ffffff" stroke-width="0" font-size="9.4" text-anchor="middle" font-weight="normal" textLength="31" lengthAdjust="spacingAndGlyphs" >Continuous</text>
<text x="194.5" y="349" fill="#ffffff" stroke="#ffffff" stroke-width="0.25" font-size="4.5" text-anchor="start" font-weight="bold" >15</text>
<text x="194.5" y="367" fill="#ffffff" stroke="#ffffff" stroke-width="0.25" font-size="4.5" text-anchor="start" font-weight="bold" >12.5</text>
<text x="194.5" y="385" fill="#ffffff" stroke="#ffffff" stroke-width="0.25" font-size="4.5" text-anchor="start" font-weight="bold" >10</text>
<text x="194.5" y="403" fill="#ffffff" stroke="#ffffff" stroke-width="0.25" font-size="4.5" text-anchor="start" font-weight="bold" >7.5</text>
<text x="194.5" y="421" fill="#ffffff" stroke="#ffffff" stroke-width="0.25" font-size="4.5" text-anchor="start" font-weight="bold" >5</text>
<text x="194.5" y="439" fill="#ffffff" stroke="#ffffff" stroke-width="0.25" font-size="4.5" text-anchor="start" font-weight="bold" >2.5</text>
<text x="194.5" y="457" fill="#ffffff" stroke="#ffffff" stroke-width="0.25" font-size="4.5" text-anchor="start" font-weight="bold" >0</text>
<text x="207" y="462" fill="#ffffff" stroke="#ffffff" stroke-width="0.25" font-size="4.5" text-anchor="middle" font-weight="bold" >0</text>
<text x="244" y="462" fill="#ffffff" stroke="#ffffff" stroke-width="0.25" font-size="4.5" text-anchor="middle" font-weight="bold" >1000</text>
<text x="280" y="462" fill="#ffffff" stroke="#ffffff" stroke-width="0.25" font-size="4.5" text-anchor="middle" font-weight="bold" >2000</text>
<text x="316" y="462" fill="#ffffff" stroke="#ffffff" stroke-width="0.25" font-size="4.5" text-anchor="middle" font-weight="bold" >3000</text>
<text x="352" y="462" fill="#ffffff" stroke="#ffffff" stroke-width="0.25" font-size="4.5" text-anchor="middle" font-weight="bold" >4000</text>
<text x="286" y="472" fill="#ffffff" stroke="#ffffff" stroke-width="0.25" font-size="4.5" text-anchor="middle" font-weight="bold" textLength="18" lengthAdjust="spacingAndGlyphs" >n (rpm)</text>
<text transform="translate(188,399.5) rotate(-90)" fill="#ffffff" stroke="#ffffff" stroke-width="0.25" font-size="4.5" text-anchor="middle" font-weight="bold" textLength="20" lengthAdjust="spacingAndGlyphs">T (N.m)</text>
<text x="209" y="374.5" fill="#ffffff" stroke="#ffffff" stroke-width="0.25" font-size="4.5" text-anchor="start" font-weight="bold" >10.45</text>
<text x="316" y="382" fill="#ffffff" stroke="#ffffff" stroke-width="0.25" font-size="4.5" text-anchor="start" font-weight="bold" >9.5</text>
<text x="209" y="421.5" fill="#ffffff" stroke="#ffffff" stroke-width="0.25" font-size="4.5" text-anchor="start" font-weight="bold" >4.78</text>
<text x="316" y="427" fill="#ffffff" stroke="#ffffff" stroke-width="0.25" font-size="4.5" text-anchor="start" font-weight="bold" >3.8</text>
<rect x="568" y="76" width="203" height="1" fill="#00ff00"/>
<rect x="568" y="85" width="203" height="1" fill="#00ff00"/>
<rect x="568" y="95" width="203" height="1" fill="#00ff00"/>
<rect x="568" y="106" width="203" height="1" fill="#00ff00"/>
<rect x="568" y="116" width="203" height="1" fill="#00ff00"/>
<rect x="568" y="126" width="203" height="1" fill="#00ff00"/>
<rect x="568" y="136" width="203" height="1" fill="#00ff00"/>
<rect x="568" y="146" width="203" height="1" fill="#00ff00"/>
<rect x="568" y="156" width="203" height="1" fill="#00ff00"/>
<rect x="568" y="166" width="203" height="1" fill="#00ff00"/>
<rect x="568" y="177" width="203" height="1" fill="#00ff00"/>
<rect x="568" y="187" width="203" height="1" fill="#00ff00"/>
<rect x="568" y="197" width="203" height="1" fill="#00ff00"/>
<rect x="568" y="207" width="203" height="1" fill="#00ff00"/>
<rect x="568" y="217" width="203" height="1" fill="#00ff00"/>
<rect x="568" y="227" width="203" height="1" fill="#00ff00"/>
<rect x="568" y="238" width="203" height="1" fill="#00ff00"/>
<rect x="568" y="248" width="203" height="1" fill="#00ff00"/>
<rect x="568" y="258" width="203" height="1" fill="#00ff00"/>
<rect x="568" y="268" width="203" height="1" fill="#00ff00"/>
<rect x="568" y="278" width="203" height="1" fill="#00ff00"/>
<rect x="568" y="288" width="203" height="1" fill="#00ff00"/>
<rect x="568" y="298" width="203" height="1" fill="#00ff00"/>
<rect x="568" y="309" width="203" height="1" fill="#00ff00"/>
<rect x="670" y="319" width="101" height="1" fill="#00ff00"/>
<rect x="568" y="329" width="203" height="1" fill="#00ff00"/>
<rect x="568" y="339" width="203" height="1" fill="#00ff00"/>
<rect x="568" y="349" width="203" height="1" fill="#00ff00"/>
<rect x="568" y="359" width="203" height="1" fill="#00ff00"/>
<rect x="619" y="369" width="152" height="1" fill="#00ff00"/>
<rect x="619" y="379" width="152" height="1" fill="#00ff00"/>
<rect x="619" y="390" width="152" height="1" fill="#00ff00"/>
<rect x="568" y="410" width="203" height="1" fill="#00ff00"/>
<rect x="619" y="419" width="152" height="1" fill="#00ff00"/>
<rect x="568" y="76" width="1" height="355" fill="#00ff00"/>
<rect x="670" y="85" width="1" height="346" fill="#00ff00"/>
<rect x="619" y="359" width="1" height="72" fill="#00ff00"/>
<text x="667.5" y="83.3" fill="#00ff00" stroke="#00ff00" stroke-width="0.3" font-size="6.2" text-anchor="middle" font-weight="normal" textLength="17" lengthAdjust="spacingAndGlyphs" >规格表</text>
<text x="619.5" y="92.0" fill="#00ff00" stroke="#00ff00" stroke-width="0.3" font-size="6.2" text-anchor="middle" font-weight="normal" textLength="13.2" lengthAdjust="spacingAndGlyphs" >极对数</text>
<text x="718.5" y="92.0" fill="#00ff00" stroke="#00ff00" stroke-width="0.3" font-size="5.5" text-anchor="middle" font-weight="normal" textLength="2.8" lengthAdjust="spacingAndGlyphs" >3</text>
<text x="619.5" y="102.0" fill="#00ff00" stroke="#00ff00" stroke-width="0.3" font-size="6.2" text-anchor="middle" font-weight="normal" textLength="98" lengthAdjust="spacingAndGlyphs" >驱动器直流母线电压 <tspan font-size="5.6">VDC(V)</tspan></text>
<text x="718.5" y="102.0" fill="#00ff00" stroke="#00ff00" stroke-width="0.3" font-size="5.5" text-anchor="middle" font-weight="normal" textLength="8.399999999999999" lengthAdjust="spacingAndGlyphs" >300</text>
<text x="619.5" y="113.0" fill="#00ff00" stroke="#00ff00" stroke-width="0.3" font-size="6.2" text-anchor="middle" font-weight="normal" textLength="45" lengthAdjust="spacingAndGlyphs" >额定功率  <tspan font-size="7.2">Pn(W)</tspan></text>
<text x="718.5" y="113.0" fill="#00ff00" stroke="#00ff00" stroke-width="0.3" font-size="5.5" text-anchor="middle" font-weight="normal" textLength="8.399999999999999" lengthAdjust="spacingAndGlyphs" >940</text>
<text x="619.5" y="123.0" fill="#00ff00" stroke="#00ff00" stroke-width="0.3" font-size="6.2" text-anchor="middle" font-weight="normal" textLength="49" lengthAdjust="spacingAndGlyphs" >额定转矩  <tspan font-size="7.2">Tn(N.m)</tspan></text>
<text x="718.5" y="123.0" fill="#00ff00" stroke="#00ff00" stroke-width="0.3" font-size="5.5" text-anchor="middle" font-weight="normal" textLength="8.399999999999999" lengthAdjust="spacingAndGlyphs" >3.2</text>
<text x="619.5" y="133.0" fill="#00ff00" stroke="#00ff00" stroke-width="0.3" font-size="6.2" text-anchor="middle" font-weight="normal" textLength="49" lengthAdjust="spacingAndGlyphs" >额定转速  <tspan font-size="7.2">nN(rpm)</tspan></text>
<text x="718.5" y="133.0" fill="#00ff00" stroke="#00ff00" stroke-width="0.3" font-size="5.5" text-anchor="middle" font-weight="normal" textLength="11" lengthAdjust="spacingAndGlyphs" >3000</text>
<text x="619.5" y="143.0" fill="#00ff00" stroke="#00ff00" stroke-width="0.3" font-size="6.2" text-anchor="middle" font-weight="normal" textLength="45" lengthAdjust="spacingAndGlyphs" >额定电流  <tspan font-size="7.2">In(A)</tspan></text>
<text x="718.5" y="143.0" fill="#00ff00" stroke="#00ff00" stroke-width="0.3" font-size="5.5" text-anchor="middle" font-weight="normal" textLength="11" lengthAdjust="spacingAndGlyphs" >11.6</text>
<text x="619.5" y="153.0" fill="#00ff00" stroke="#00ff00" stroke-width="0.3" font-size="6.2" text-anchor="middle" font-weight="normal" textLength="59" lengthAdjust="spacingAndGlyphs" >瞬间最大转矩  <tspan font-size="7.2">Tm(N.m)</tspan></text>
<text x="718.5" y="153.0" fill="#00ff00" stroke="#00ff00" stroke-width="0.3" font-size="5.5" text-anchor="middle" font-weight="normal" textLength="5.6" lengthAdjust="spacingAndGlyphs" >35</text>
<text x="619.5" y="163.0" fill="#00ff00" stroke="#00ff00" stroke-width="0.3" font-size="6.2" text-anchor="middle" font-weight="normal" textLength="54" lengthAdjust="spacingAndGlyphs" >瞬间最大电流  <tspan font-size="7.2">Im(A)</tspan></text>
<text x="718.5" y="163.0" fill="#00ff00" stroke="#00ff00" stroke-width="0.3" font-size="5.5" text-anchor="middle" font-weight="normal" textLength="5.6" lengthAdjust="spacingAndGlyphs" >75</text>
<text x="619.5" y="173.0" fill="#00ff00" stroke="#00ff00" stroke-width="0.3" font-size="6.2" text-anchor="middle" font-weight="normal" textLength="57" lengthAdjust="spacingAndGlyphs" >堵转转矩  <tspan font-size="7.2">Ts(N.m)</tspan></text>
<text x="718.5" y="173.0" fill="#00ff00" stroke="#00ff00" stroke-width="0.3" font-size="5.5" text-anchor="middle" font-weight="normal" textLength="11" lengthAdjust="spacingAndGlyphs" >4.78</text>
<text x="619.5" y="184.0" fill="#00ff00" stroke="#00ff00" stroke-width="0.3" font-size="6.2" text-anchor="middle" font-weight="normal" textLength="52" lengthAdjust="spacingAndGlyphs" >堵转电流  <tspan font-size="7.2">Is(A)</tspan></text>
<text x="718.5" y="184.0" fill="#00ff00" stroke="#00ff00" stroke-width="0.3" font-size="5.5" text-anchor="middle" font-weight="normal" textLength="11" lengthAdjust="spacingAndGlyphs" >14.76</text>
<text x="619.5" y="194.0" fill="#00ff00" stroke="#00ff00" stroke-width="0.3" font-size="6.2" text-anchor="middle" font-weight="normal" textLength="39.4" lengthAdjust="spacingAndGlyphs" >线电阻  <tspan font-size="7.2">RL(Ω)</tspan></text>
<text x="718.5" y="194.0" fill="#00ff00" stroke="#00ff00" stroke-width="0.3" font-size="5.5" text-anchor="middle" font-weight="normal" textLength="11" lengthAdjust="spacingAndGlyphs" >0.84</text>
<text x="619.5" y="204.0" fill="#00ff00" stroke="#00ff00" stroke-width="0.3" font-size="6.2" text-anchor="middle" font-weight="normal" textLength="39.4" lengthAdjust="spacingAndGlyphs" >线电感  <tspan font-size="7.2">LL(mH)</tspan></text>
<text x="718.5" y="204.0" fill="#00ff00" stroke="#00ff00" stroke-width="0.3" font-size="5.5" text-anchor="middle" font-weight="normal" textLength="11" lengthAdjust="spacingAndGlyphs" >2.75</text>
<text x="619.5" y="214.0" fill="#00ff00" stroke="#00ff00" stroke-width="0.3" font-size="6.2" text-anchor="middle" font-weight="normal" textLength="52" lengthAdjust="spacingAndGlyphs" >电气时间常数 <tspan font-size="7.2">τe(ms)</tspan></text>
<text x="718.5" y="214.0" fill="#00ff00" stroke="#00ff00" stroke-width="0.3" font-size="5.5" text-anchor="middle" font-weight="normal" textLength="11" lengthAdjust="spacingAndGlyphs" >3.27</text>
<text x="619.5" y="224.0" fill="#00ff00" stroke="#00ff00" stroke-width="0.3" font-size="6.2" text-anchor="middle" font-weight="normal" textLength="52" lengthAdjust="spacingAndGlyphs" >机械时间常数 <tspan font-size="7.2">τm(ms)</tspan></text>
<text x="718.5" y="224.0" fill="#00ff00" stroke="#00ff00" stroke-width="0.3" font-size="5.5" text-anchor="middle" font-weight="normal" textLength="2.8" lengthAdjust="spacingAndGlyphs" >3</text>
<text x="619.5" y="234.0" fill="#00ff00" stroke="#00ff00" stroke-width="0.3" font-size="6.2" text-anchor="middle" font-weight="normal" textLength="57" lengthAdjust="spacingAndGlyphs" >反电势常数 <tspan font-size="7.2">Ke(V/krpm)</tspan></text>
<text x="718.5" y="234.0" fill="#00ff00" stroke="#00ff00" stroke-width="0.3" font-size="5.5" text-anchor="middle" font-weight="normal" textLength="5.6" lengthAdjust="spacingAndGlyphs" >21</text>
<text x="619.5" y="245.0" fill="#00ff00" stroke="#00ff00" stroke-width="0.3" font-size="6.2" text-anchor="middle" font-weight="normal" textLength="46.7" lengthAdjust="spacingAndGlyphs" >转矩常数  <tspan font-size="7.2">Kt(N.m/A)</tspan></text>
<text x="718.5" y="245.0" fill="#00ff00" stroke="#00ff00" stroke-width="0.3" font-size="5.5" text-anchor="middle" font-weight="normal" textLength="11" lengthAdjust="spacingAndGlyphs" >0.32</text>
<text x="619.5" y="255.0" fill="#00ff00" stroke="#00ff00" stroke-width="0.3" font-size="6.2" text-anchor="middle" font-weight="normal" textLength="66.7" lengthAdjust="spacingAndGlyphs" >转子转动惯量  <tspan font-size="7.2">Jm(Kg.cm²)</tspan></text>
<text x="718.5" y="255.0" fill="#00ff00" stroke="#00ff00" stroke-width="0.3" font-size="5.5" text-anchor="middle" font-weight="normal" textLength="8.399999999999999" lengthAdjust="spacingAndGlyphs" >7.7</text>
<text x="619.5" y="265.0" fill="#00ff00" stroke="#00ff00" stroke-width="0.3" font-size="6.2" text-anchor="middle" font-weight="normal" textLength="60" lengthAdjust="spacingAndGlyphs" >最大允许 <tspan font-size="7.2">dv/dt(KV/μs)</tspan></text>
<text x="718.5" y="265.0" fill="#00ff00" stroke="#00ff00" stroke-width="0.3" font-size="5.5" text-anchor="middle" font-weight="normal" textLength="2.8" lengthAdjust="spacingAndGlyphs" >8</text>
<text x="619.5" y="275.0" fill="#00ff00" stroke="#00ff00" stroke-width="0.3" font-size="6.2" text-anchor="middle" font-weight="normal" textLength="21" lengthAdjust="spacingAndGlyphs" >绝缘等级</text>
<text x="718.5" y="275.0" fill="#00ff00" stroke="#00ff00" stroke-width="0.3" font-size="5.5" text-anchor="middle" font-weight="normal" textLength="2.8" lengthAdjust="spacingAndGlyphs" >F</text>
<text x="619.5" y="285.0" fill="#00ff00" stroke="#00ff00" stroke-width="0.3" font-size="6.2" text-anchor="middle" font-weight="normal" textLength="43.6" lengthAdjust="spacingAndGlyphs" >最大径向力  <tspan font-size="7.2">Fr(N)</tspan></text>
<text x="718.5" y="285.0" fill="#00ff00" stroke="#00ff00" stroke-width="0.3" font-size="5.5" text-anchor="middle" font-weight="normal" textLength="8.399999999999999" lengthAdjust="spacingAndGlyphs" >300</text>
<text x="619.5" y="295.0" fill="#00ff00" stroke="#00ff00" stroke-width="0.3" font-size="6.2" text-anchor="middle" font-weight="normal" textLength="43.6" lengthAdjust="spacingAndGlyphs" >最大轴向力  <tspan font-size="7.2">Fa(N)</tspan></text>
<text x="718.5" y="295.0" fill="#00ff00" stroke="#00ff00" stroke-width="0.3" font-size="5.5" text-anchor="middle" font-weight="normal" textLength="5.6" lengthAdjust="spacingAndGlyphs" >90</text>
<text x="619.5" y="305.0" fill="#00ff00" stroke="#00ff00" stroke-width="0.3" font-size="6.2" text-anchor="middle" font-weight="normal" textLength="20.5" lengthAdjust="spacingAndGlyphs" >重量<tspan font-size="7.2">(Kg)</tspan></text>
<text x="718.5" y="305.0" fill="#00ff00" stroke="#00ff00" stroke-width="0.3" font-size="5.5" text-anchor="middle" font-weight="normal" textLength="8.399999999999999" lengthAdjust="spacingAndGlyphs" >6.5</text>
<text x="616" y="321.5" fill="#00ff00" stroke="#00ff00" stroke-width="0.3" font-size="6.2" text-anchor="middle" font-weight="normal" textLength="20" lengthAdjust="spacingAndGlyphs" >反馈装置</text>
<text x="718" y="316.5" fill="#00ff00" stroke="#00ff00" stroke-width="0.3" font-size="6.2" text-anchor="middle" font-weight="normal" textLength="53" lengthAdjust="spacingAndGlyphs" >2500ppr 增量式 编码器</text>
<text x="718" y="326.5" fill="#00ff00" stroke="#00ff00" stroke-width="0.3" font-size="6.2" text-anchor="middle" font-weight="normal" textLength="43" lengthAdjust="spacingAndGlyphs" >(开环 Encoder 线数 6)</text>
<text x="617.5" y="336.6" fill="#00ff00" stroke="#00ff00" stroke-width="0.3" font-size="6.2" text-anchor="middle" font-weight="normal" textLength="25" lengthAdjust="spacingAndGlyphs" >温度传感器</text>
<text x="718.5" y="336.6" fill="#00ff00" stroke="#00ff00" stroke-width="0.3" font-size="6.2" text-anchor="middle" font-weight="normal" >无</text>
<text x="616" y="346.6" fill="#00ff00" stroke="#00ff00" stroke-width="0.3" font-size="6.2" text-anchor="middle" font-weight="normal" textLength="20" lengthAdjust="spacingAndGlyphs" >冷却方式</text>
<text x="718.5" y="346.6" fill="#ff0000" stroke="#ff0000" stroke-width="0.3" font-size="6.2" text-anchor="middle" font-weight="normal" textLength="36" lengthAdjust="spacingAndGlyphs" >全封闭, 自冷却</text>
<text x="617" y="356.6" fill="#00ff00" stroke="#00ff00" stroke-width="0.3" font-size="6.2" text-anchor="middle" font-weight="normal" textLength="21" lengthAdjust="spacingAndGlyphs" >防护等级</text>
<text x="719" y="356.6" fill="#ff0000" stroke="#ff0000" stroke-width="0.3" font-size="6.2" text-anchor="middle" font-weight="normal" textLength="36" lengthAdjust="spacingAndGlyphs" >IP65, 轴端IP54</text>
<text x="592" y="387" fill="#00ff00" stroke="#00ff00" stroke-width="0.3" font-size="6.2" text-anchor="middle" font-weight="normal" textLength="31" lengthAdjust="spacingAndGlyphs" >使用环境条件</text>
<text x="643" y="366.6" fill="#00ff00" stroke="#00ff00" stroke-width="0.3" font-size="6.2" text-anchor="middle" font-weight="normal" textLength="10.5" lengthAdjust="spacingAndGlyphs" >温度</text>
<text x="718" y="366.6" fill="#00ff00" stroke="#00ff00" stroke-width="0.3" font-size="6.2" text-anchor="middle" font-weight="normal" textLength="29" lengthAdjust="spacingAndGlyphs" >-20℃~40℃</text>
<text x="643" y="377" fill="#00ff00" stroke="#00ff00" stroke-width="0.3" font-size="6.2" text-anchor="middle" font-weight="normal" textLength="10.5" lengthAdjust="spacingAndGlyphs" >湿度</text>
<text x="719" y="377" fill="#ff0000" stroke="#ff0000" stroke-width="0.3" font-size="6.2" text-anchor="middle" font-weight="normal" textLength="46" lengthAdjust="spacingAndGlyphs" >90%RH以下(无结露)</text>
<text x="643" y="387.5" fill="#00ff00" stroke="#00ff00" stroke-width="0.3" font-size="6.2" text-anchor="middle" font-weight="normal" textLength="10.5" lengthAdjust="spacingAndGlyphs" >环境</text>
<text x="719" y="387.5" fill="#ff0000" stroke="#ff0000" stroke-width="0.3" font-size="6.2" text-anchor="middle" font-weight="normal" textLength="83" lengthAdjust="spacingAndGlyphs" >远离活性、可燃性气体，油滴，灰尘</text>
<text x="643" y="403" fill="#00ff00" stroke="#00ff00" stroke-width="0.3" font-size="6.2" text-anchor="middle" font-weight="normal" textLength="10.5" lengthAdjust="spacingAndGlyphs" >海拔</text>
<text x="717" y="397.5" fill="#ff0000" stroke="#ff0000" stroke-width="0.3" font-size="6.2" text-anchor="middle" font-weight="normal" textLength="36" lengthAdjust="spacingAndGlyphs" >最高海拔4000m,</text>
<text x="718" y="407.5" fill="#ff0000" stroke="#ff0000" stroke-width="0.3" font-size="6.2" text-anchor="middle" font-weight="normal" textLength="89" lengthAdjust="spacingAndGlyphs" >1000m以上，每升高100m功率下降1.5%</text>
<text x="592" y="421.5" fill="#00ff00" stroke="#00ff00" stroke-width="0.3" font-size="6.2" text-anchor="middle" font-weight="normal" textLength="20" lengthAdjust="spacingAndGlyphs" >安装方式</text>
<text x="643" y="417.8" fill="#00ff00" stroke="#00ff00" stroke-width="0.3" font-size="6.2" text-anchor="middle" font-weight="normal" textLength="10.5" lengthAdjust="spacingAndGlyphs" >安装</text>
<text x="718.5" y="417.8" fill="#ff0000" stroke="#ff0000" stroke-width="0.3" font-size="6.2" text-anchor="middle" font-weight="normal" textLength="83" lengthAdjust="spacingAndGlyphs" >用法兰安装,尺寸: 45x45x127mm</text>
<text x="643" y="427.5" fill="#00ff00" stroke="#00ff00" stroke-width="0.3" font-size="6.2" text-anchor="middle" font-weight="normal" textLength="10.5" lengthAdjust="spacingAndGlyphs" >散热</text>
<text x="718" y="427.5" fill="#ff0000" stroke="#ff0000" stroke-width="0.3" font-size="6.2" text-anchor="middle" font-weight="normal" textLength="83" lengthAdjust="spacingAndGlyphs" >环境温度40℃时，需安装散热片60K</text>
<circle cx="779.5" cy="192.5" r="5.5" stroke="#ffffff" stroke-width="1" fill="none"  shape-rendering="geometricPrecision"/>
<text x="779.5" y="194.5" fill="#00ff00" stroke="#00ff00" stroke-width="0.3" font-size="4.5" text-anchor="middle" font-weight="normal" textLength="7.5" lengthAdjust="spacingAndGlyphs" >A1</text>
<path d="M467.5 498 V430.5 H771" fill="none" stroke="#ffffff" stroke-width="3"/>
<rect x="468" y="439" width="152" height="1" fill="#ffff00"/>
<rect x="468" y="447" width="220" height="1" fill="#ffff00"/>
<rect x="482" y="432" width="1" height="16" fill="#ffff00"/>
<rect x="534" y="432" width="1" height="16" fill="#ffff00"/>
<rect x="562" y="432" width="1" height="16" fill="#ffff00"/>
<rect x="591" y="432" width="1" height="16" fill="#ffff00"/>
<rect x="543" y="447" width="1" height="51" fill="#ffff00"/>
<rect x="619" y="432" width="1" height="66" fill="#ffff00"/>
<rect x="661" y="432" width="1" height="49" fill="#ffff00"/>
<rect x="687" y="432" width="1" height="66" fill="#ffff00"/>
<rect x="543" y="456" width="44" height="1" fill="#ffff00"/>
<rect x="586" y="447" width="1" height="34" fill="#ffff00"/>
<rect x="543" y="480" width="228" height="1" fill="#ffff00"/>
<rect x="586" y="452" width="76" height="1" fill="#ffff00"/>
<rect x="586" y="464" width="102" height="1" fill="#ffff00"/>
<rect x="619" y="435" width="43" height="1" fill="#ffff00"/>
<rect x="619" y="469" width="43" height="1" fill="#ffff00"/>
<rect x="619" y="489" width="69" height="1" fill="#ffff00"/>
<rect x="702" y="432" width="1" height="24" fill="#ffff00"/>
<rect x="702" y="443" width="69" height="1" fill="#ffff00"/>
<rect x="702" y="456" width="69" height="1" fill="#ffff00"/>
<rect x="710" y="456" width="1" height="25" fill="#ffff00"/>
<rect x="710" y="468" width="61" height="1" fill="#ffff00"/>
<rect x="746" y="468" width="1" height="13" fill="#ffff00"/>
<text x="475" y="438" fill="#00ff00" stroke="#00ff00" stroke-width="0.35" font-size="6.6" text-anchor="middle" font-weight="bold" textLength="9.5" lengthAdjust="spacingAndGlyphs" >VER</text>
<text x="508" y="438" fill="#00ff00" stroke="#00ff00" stroke-width="0.35" font-size="6.6" text-anchor="middle" font-weight="bold" textLength="19" lengthAdjust="spacingAndGlyphs" >DESCRIPTION</text>
<text x="548" y="438" fill="#00ff00" stroke="#00ff00" stroke-width="0.35" font-size="6.6" text-anchor="middle" font-weight="bold" textLength="8" lengthAdjust="spacingAndGlyphs" >ECN</text>
<text x="576" y="438" fill="#00ff00" stroke="#00ff00" stroke-width="0.35" font-size="6.6" text-anchor="middle" font-weight="bold" textLength="5" lengthAdjust="spacingAndGlyphs" >BY</text>
<text x="605" y="438" fill="#00ff00" stroke="#00ff00" stroke-width="0.35" font-size="6.6" text-anchor="middle" font-weight="bold" textLength="21" lengthAdjust="spacingAndGlyphs" >YYYY-MM-DD</text>
<text x="475" y="446" fill="#00ff00" stroke="#00ff00" stroke-width="0.35" font-size="6.6" text-anchor="middle" font-weight="bold" textLength="9.5" lengthAdjust="spacingAndGlyphs" >REV</text>
<text x="508" y="446" fill="#00ff00" stroke="#00ff00" stroke-width="0.35" font-size="6.6" text-anchor="middle" font-weight="bold" textLength="17" lengthAdjust="spacingAndGlyphs" >ECN/ECA</text>
<text x="548" y="446" fill="#00ff00" stroke="#00ff00" stroke-width="0.35" font-size="6.6" text-anchor="middle" font-weight="bold" textLength="9" lengthAdjust="spacingAndGlyphs" >DRN</text>
<text x="576" y="446" fill="#00ff00" stroke="#00ff00" stroke-width="0.35" font-size="6.6" text-anchor="middle" font-weight="bold" textLength="13" lengthAdjust="spacingAndGlyphs" >APPD</text>
<text x="605" y="446" fill="#00ff00" stroke="#00ff00" stroke-width="0.35" font-size="6.6" text-anchor="middle" font-weight="bold" textLength="13" lengthAdjust="spacingAndGlyphs" >DATE</text>
<text x="469.5" y="450.5" fill="#00ff00" stroke="#00ff00" stroke-width="0.25" font-size="4" text-anchor="start" font-weight="bold" textLength="67" lengthAdjust="spacingAndGlyphs" >UNLESS OTHERWISE SPECIFIED</text>
<text x="485" y="456.3" fill="#00ff00" stroke="#00ff00" stroke-width="0.25" font-size="4" text-anchor="start" font-weight="bold" textLength="33" lengthAdjust="spacingAndGlyphs" >TOLERANCE IS</text>
<text x="472" y="462.6" fill="#00ff00" stroke="#00ff00" stroke-width="0.25" font-size="4" text-anchor="start" font-weight="bold" textLength="27" lengthAdjust="spacingAndGlyphs" >DECIMALS:</text>
<text x="515" y="462.6" fill="#00ff00" stroke="#00ff00" stroke-width="0.25" font-size="4" text-anchor="start" font-weight="bold" textLength="26" lengthAdjust="spacingAndGlyphs" >ANGULAR:</text>
<text x="470.5" y="469.5" fill="#00ff00" stroke="#00ff00" stroke-width="0.25" font-size="4" text-anchor="start" font-weight="bold" >.X</text>
<text x="470.5" y="476" fill="#00ff00" stroke="#00ff00" stroke-width="0.25" font-size="4" text-anchor="start" font-weight="bold" >.XX</text>
<text x="470.5" y="483" fill="#00ff00" stroke="#00ff00" stroke-width="0.25" font-size="4" text-anchor="start" font-weight="bold" >.XXX</text>
<text x="489" y="471.5" fill="#00ff00" stroke="#00ff00" stroke-width="0.25" font-size="6.5" text-anchor="start" font-weight="normal" textLength="12" lengthAdjust="spacingAndGlyphs" >±0.5</text>
<text x="489" y="478.5" fill="#00ff00" stroke="#00ff00" stroke-width="0.25" font-size="6.5" text-anchor="start" font-weight="normal" textLength="16" lengthAdjust="spacingAndGlyphs" >±0.25</text>
<text x="489" y="485.5" fill="#00ff00" stroke="#00ff00" stroke-width="0.25" font-size="6.5" text-anchor="start" font-weight="normal" textLength="11" lengthAdjust="spacingAndGlyphs" >±0.1</text>
<text x="517" y="475" fill="#00ff00" stroke="#00ff00" stroke-width="0.25" font-size="6.5" text-anchor="start" font-weight="normal" textLength="19" lengthAdjust="spacingAndGlyphs" >±0°30'</text>
<text x="472" y="489" fill="#00ff00" stroke="#00ff00" stroke-width="0.25" font-size="4" text-anchor="start" font-weight="bold" textLength="24" lengthAdjust="spacingAndGlyphs" >UNIT: mm</text>
<text x="473" y="495.2" fill="#00ff00" stroke="#00ff00" stroke-width="0.25" font-size="4" text-anchor="start" font-weight="bold" textLength="62" lengthAdjust="spacingAndGlyphs" >DO NOT SCALE DRAWING</text>
<text x="546" y="452" fill="#00ff00" stroke="#00ff00" stroke-width="0.25" font-size="4" text-anchor="start" font-weight="bold" textLength="27" lengthAdjust="spacingAndGlyphs" >MATERIAL</text>
<text x="588" y="450.5" fill="#00ff00" stroke="#00ff00" stroke-width="0.25" font-size="4" text-anchor="start" font-weight="bold" textLength="16" lengthAdjust="spacingAndGlyphs" >FINISH</text>
<text x="545" y="485.3" fill="#00ff00" stroke="#00ff00" stroke-width="0.25" font-size="4" text-anchor="start" font-weight="bold" textLength="64" lengthAdjust="spacingAndGlyphs" >THIRD ANGLE PROJECTION</text>
<path d="M564.5 492.5 L567.5 490.5 H574.5 V495.5 H567.5 Z M565 493.5 H575" fill="none" stroke="#00ff00" stroke-width="1"/>
<rect x="567" y="490" width="8" height="2" fill="#00ff00"/>
<circle cx="586.5" cy="493" r="3" stroke="#00ff00" stroke-width="1.4" fill="none"  shape-rendering="geometricPrecision"/>
<circle cx="586.5" cy="493" r="0.9" stroke="#00ff00" stroke-width="1" fill="#00ff00"  shape-rendering="geometricPrecision"/>
<text x="620.5" y="434" fill="#00ff00" stroke="#00ff00" stroke-width="0.25" font-size="4" text-anchor="start" font-weight="bold" textLength="17" lengthAdjust="spacingAndGlyphs" >DESIGN</text>
<text x="662.5" y="434" fill="#00ff00" stroke="#00ff00" stroke-width="0.25" font-size="4" text-anchor="start" font-weight="bold" textLength="12" lengthAdjust="spacingAndGlyphs" >DATE</text>
<text x="688.5" y="434" fill="#00ff00" stroke="#00ff00" stroke-width="0.25" font-size="4" text-anchor="start" font-weight="bold" textLength="9" lengthAdjust="spacingAndGlyphs" >REV.</text>
<text x="620.5" y="450.2" fill="#00ff00" stroke="#00ff00" stroke-width="0.25" font-size="4" text-anchor="start" font-weight="bold" textLength="17" lengthAdjust="spacingAndGlyphs" >CHECK</text>
<text x="620.5" y="467" fill="#00ff00" stroke="#00ff00" stroke-width="0.25" font-size="4" text-anchor="start" font-weight="bold" textLength="13" lengthAdjust="spacingAndGlyphs" >APPD</text>
<text x="620.5" y="485.5" fill="#00ff00" stroke="#00ff00" stroke-width="0.25" font-size="4" text-anchor="start" font-weight="bold" textLength="16" lengthAdjust="spacingAndGlyphs" >SCALE</text>
<text x="620.5" y="494.2" fill="#00ff00" stroke="#00ff00" stroke-width="0.25" font-size="4" text-anchor="start" font-weight="bold" textLength="15" lengthAdjust="spacingAndGlyphs" >SHEET</text>
<text x="659" y="494.2" fill="#00ff00" stroke="#00ff00" stroke-width="0.25" font-size="4" text-anchor="start" font-weight="bold" textLength="8" lengthAdjust="spacingAndGlyphs" >OF</text>
<text x="638.5" y="442" fill="#ff0000" stroke="#ff0000" stroke-width="0.25" font-size="5" text-anchor="middle" font-weight="bold" textLength="6" lengthAdjust="spacingAndGlyphs" >Sil</text>
<text x="671.5" y="443.3" fill="#ff0000" stroke="#ff0000" stroke-width="0.25" font-size="5" text-anchor="middle" font-weight="bold" textLength="17" lengthAdjust="spacingAndGlyphs" >2012.12.5</text>
<text x="639.5" y="458.5" fill="#ff0000" stroke="#ff0000" stroke-width="0.25" font-size="5" text-anchor="middle" font-weight="bold" textLength="6" lengthAdjust="spacingAndGlyphs" >XXX</text>
<text x="671.5" y="459.8" fill="#ff0000" stroke="#ff0000" stroke-width="0.25" font-size="5" text-anchor="middle" font-weight="bold" textLength="17" lengthAdjust="spacingAndGlyphs" >2012.12.5</text>
<text x="640" y="474.5" fill="#ff0000" stroke="#ff0000" stroke-width="0.25" font-size="5" text-anchor="middle" font-weight="bold" >X</text>
<text x="671.5" y="475.8" fill="#ff0000" stroke="#ff0000" stroke-width="0.25" font-size="5" text-anchor="middle" font-weight="bold" textLength="17" lengthAdjust="spacingAndGlyphs" >2012.12.5</text>
<text x="688.5" y="444.5" fill="#00ff00" stroke="#00ff00" stroke-width="0.25" font-size="4" text-anchor="start" font-weight="bold" textLength="13" lengthAdjust="spacingAndGlyphs" >TITLE</text>
<text x="688.5" y="457.5" fill="#00ff00" stroke="#00ff00" stroke-width="0.25" font-size="4" text-anchor="start" font-weight="bold" textLength="21" lengthAdjust="spacingAndGlyphs" >PROD NO</text>
<text x="688.5" y="469.5" fill="#00ff00" stroke="#00ff00" stroke-width="0.25" font-size="4" text-anchor="start" font-weight="bold" textLength="22" lengthAdjust="spacingAndGlyphs" >DWG NO</text>
<text x="734" y="438.8" fill="#ff0000" stroke="#ff0000" stroke-width="0.25" font-size="9" text-anchor="middle" font-weight="normal" textLength="28.5" lengthAdjust="spacingAndGlyphs" >9696dSS</text>
<text x="733.5" y="451.8" fill="#00ff00" stroke="#00ff00" stroke-width="0.2" font-size="10" text-anchor="middle" font-weight="normal" textLength="57" lengthAdjust="spacingAndGlyphs" >Outside Diagram</text>
<text x="738" y="462.2" fill="#00ff00" stroke="#00ff00" stroke-width="0.25" font-size="5.5" text-anchor="middle" font-weight="bold" textLength="52" lengthAdjust="spacingAndGlyphs" >130D-0157-30AAK-4LKP</text>
<text x="747" y="471" fill="#00ff00" stroke="#00ff00" stroke-width="0.25" font-size="4" text-anchor="start" font-weight="bold" textLength="7" lengthAdjust="spacingAndGlyphs" >SIZE</text>
<text x="760" y="476" fill="#ff0000" stroke="#ff0000" stroke-width="0.25" font-size="4.5" text-anchor="middle" font-weight="bold" textLength="10" lengthAdjust="spacingAndGlyphs" >1 / 2</text>
<text x="730" y="491.2" fill="#00ff00" stroke="#00ff00" stroke-width="0.2" font-size="13" text-anchor="middle" font-weight="normal" textLength="25" lengthAdjust="spacingAndGlyphs" >Kinco</text>
</svg>
</body></html>
